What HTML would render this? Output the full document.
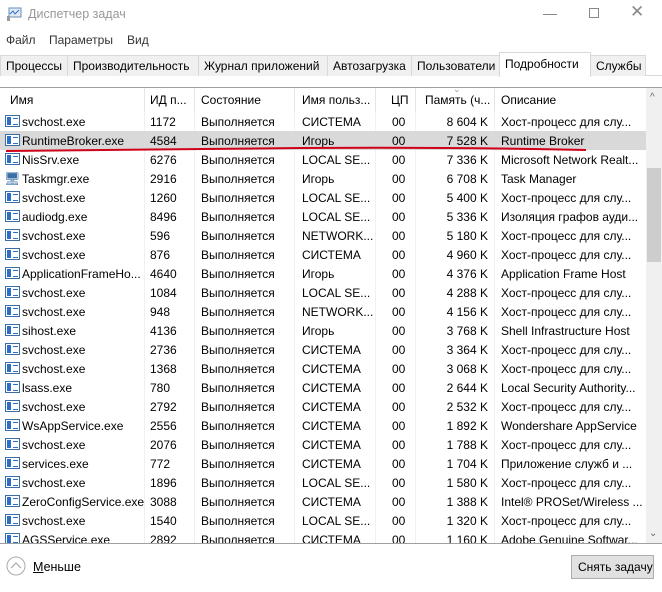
<!DOCTYPE html>
<html><head><meta charset="utf-8"><style>
*{margin:0;padding:0;box-sizing:border-box}
body{width:662px;height:592px;background:#fff;font-family:"Liberation Sans",sans-serif;font-size:12px;color:#000;position:relative;overflow:hidden}
.a{position:absolute;white-space:nowrap}
.tab{position:absolute;top:55px;height:21px;background:#f0f0f0;border:1px solid #d9d9d9;border-bottom:none;padding:3px 0 0 5px;font-size:12px}
.row{position:absolute;left:0;width:646px;height:19px}
.row span{position:absolute;top:3px;white-space:nowrap}
.ic{position:absolute;left:5px;top:3px;width:15px;height:12px;border:1px solid #3a6ea5;background:#fff}
.ic:before{content:"";position:absolute;left:1px;top:1px;width:4px;height:8px;background:#2d6fc4}
.ic:after{content:"";position:absolute;left:7px;top:2px;width:5px;height:5px;border-top:1px solid #2d6fc4;border-bottom:1px solid #2d6fc4}
.vl{position:absolute;top:88px;width:1px;height:455px;background:#f0f0f0}
.hl{position:absolute;top:88px;width:1px;height:24px;background:#e5e5e5}
</style></head><body>
<svg class="a" style="left:6px;top:6px" width="16" height="16" viewBox="0 0 16 16"><rect x="3" y="2" width="12" height="9" fill="#dfeaf5" stroke="#6a8db5"/><polyline points="4,8 7,5 9,8 13,4" fill="none" stroke="#2d6fc4"/><rect x="1" y="10" width="3" height="5" fill="#999"/></svg>
<div class="a" style="left:28px;top:7px;font-size:12.5px;color:#999">Диспетчер задач</div>
<div class="a" style="left:543px;top:4px;width:14px;height:1px;background:#888;top:14px"></div>
<div class="a" style="left:589px;top:8px;width:10px;height:10px;border:1px solid #888"></div>
<div class="a" style="left:630px;top:2px;font-size:17px;color:#888">✕</div>
<div class="a" style="left:6px;top:33px;color:#333">Файл</div>
<div class="a" style="left:49px;top:33px;color:#333">Параметры</div>
<div class="a" style="left:127px;top:33px;color:#333">Вид</div>
<div class="a" style="left:0;top:75px;width:662px;height:1px;background:#d9d9d9"></div>
<div class="tab" style="left:0;width:68px">Процессы</div>
<div class="tab" style="left:67px;width:132px">Производительность</div>
<div class="tab" style="left:198px;width:130px">Журнал приложений</div>
<div class="tab" style="left:327px;width:85px">Автозагрузка</div>
<div class="tab" style="left:411px;width:89px">Пользователи</div>
<div class="tab" style="left:499px;width:92px;top:52px;height:25px;background:#fff;padding-top:4px">Подробности</div>
<div class="tab" style="left:590px;width:56px">Службы</div>
<div class="a" style="left:0;top:87px;width:662px;height:1px;background:#a0a0a0"></div>
<div class="a" style="left:0;top:543px;width:662px;height:1px;background:#a0a0a0"></div>
<div class="vl" style="left:144px"></div><div class="vl" style="left:194px"></div><div class="vl" style="left:294px"></div><div class="vl" style="left:375px"></div><div class="vl" style="left:415px"></div><div class="vl" style="left:494px"></div>
<div class="hl" style="left:144px"></div><div class="hl" style="left:194px"></div><div class="hl" style="left:294px"></div><div class="hl" style="left:375px"></div><div class="hl" style="left:415px"></div><div class="hl" style="left:494px"></div>
<div class="a" style="left:10px;top:93px">Имя</div>
<div class="a" style="left:150px;top:93px">ИД п...</div>
<div class="a" style="left:201px;top:93px">Состояние</div>
<div class="a" style="left:302px;top:93px">Имя польз...</div>
<div class="a" style="left:391px;top:93px">ЦП</div>
<div class="a" style="left:425px;top:93px">Память (ч...</div>
<div class="a" style="left:453px;top:84px;color:#999;font-size:9px">⌄</div>
<div class="a" style="left:501px;top:93px">Описание</div>
<div class="a" style="left:646px;top:88px;width:16px;height:455px;background:#f0f0f0"></div>
<div class="a" style="left:647px;top:168px;width:14px;height:94px;background:#cdcdcd"></div>
<div class="a" style="left:650px;top:92px;font-size:10px;color:#666">^</div>
<div class="a" style="left:649px;top:528px;font-size:10px;color:#666">⌄</div>
<div id="rows"></div>
<script>
var d=[["svchost.exe","1172","СИСТЕМА","8 604 K","Хост-процесс для слу..."],
["RuntimeBroker.exe","4584","Игорь","7 528 K","Runtime Broker"],
["NisSrv.exe","6276","LOCAL SE...","7 336 K","Microsoft Network Realt..."],
["Taskmgr.exe","2916","Игорь","6 708 K","Task Manager"],
["svchost.exe","1260","LOCAL SE...","5 400 K","Хост-процесс для слу..."],
["audiodg.exe","8496","LOCAL SE...","5 336 K","Изоляция графов ауди..."],
["svchost.exe","596","NETWORK...","5 180 K","Хост-процесс для слу..."],
["svchost.exe","876","СИСТЕМА","4 960 K","Хост-процесс для слу..."],
["ApplicationFrameHo...","4640","Игорь","4 376 K","Application Frame Host"],
["svchost.exe","1084","LOCAL SE...","4 288 K","Хост-процесс для слу..."],
["svchost.exe","948","NETWORK...","4 156 K","Хост-процесс для слу..."],
["sihost.exe","4136","Игорь","3 768 K","Shell Infrastructure Host"],
["svchost.exe","2736","СИСТЕМА","3 364 K","Хост-процесс для слу..."],
["svchost.exe","1368","СИСТЕМА","3 068 K","Хост-процесс для слу..."],
["lsass.exe","780","СИСТЕМА","2 644 K","Local Security Authority..."],
["svchost.exe","2792","СИСТЕМА","2 532 K","Хост-процесс для слу..."],
["WsAppService.exe","2556","СИСТЕМА","1 892 K","Wondershare AppService"],
["svchost.exe","2076","СИСТЕМА","1 788 K","Хост-процесс для слу..."],
["services.exe","772","СИСТЕМА","1 704 K","Приложение служб и ..."],
["svchost.exe","1896","LOCAL SE...","1 580 K","Хост-процесс для слу..."],
["ZeroConfigService.exe","3088","СИСТЕМА","1 388 K","Intel® PROSet/Wireless ..."],
["svchost.exe","1540","LOCAL SE...","1 320 K","Хост-процесс для слу..."],
["AGSService.exe","2892","СИСТЕМА","1 160 K","Adobe Genuine Softwar..."]];
var h="";
d.forEach(function(r,i){var t=112+19*i;var hh=Math.min(19,543-t);
h+='<div class="row" style="top:'+t+'px;height:'+hh+'px;overflow:hidden;'+(i==1?'background:#d9d9d9;':'')+'">'+
(i==3?'<span style="left:4px;top:2px;font-size:13px;color:#3a6ea5">🖥</span>':'<div class="ic"></div>')+
'<span style="left:22px">'+r[0]+'</span><span style="left:150px">'+r[1]+'</span><span style="left:201px">Выполняется</span><span style="left:302px">'+r[2]+'</span><span style="left:392px">00</span><span style="right:158px">'+r[3]+'</span><span style="left:501px">'+r[4]+'</span></div>';});
document.getElementById("rows").innerHTML=h;
</script>
<svg class="a" style="left:0;top:145px" width="600" height="10"><path d="M6 6 Q150 4 300 3 Q450 2 586 5" stroke="#d0021b" stroke-width="2" fill="none"/></svg>
<svg class="a" style="left:6px;top:556px" width="20" height="20"><circle cx="10" cy="10" r="9" fill="none" stroke="#aaa"/><polyline points="5,12 10,7 15,12" fill="none" stroke="#aaa" stroke-width="1.2"/></svg>
<div class="a" style="left:33px;top:560px;font-size:12.5px"><u>М</u>еньше</div>
<div class="a" style="left:571px;top:555px;width:83px;height:24px;background:#e1e1e1;border:1px solid #adadad;padding:4px 0 0 6px">Снять задачу</div>
</body></html>
